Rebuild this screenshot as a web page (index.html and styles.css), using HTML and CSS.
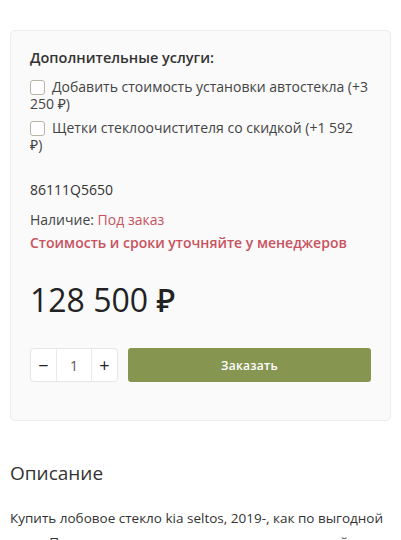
FILE: index.html
```html
<!DOCTYPE html>
<html>
<head>
<meta name="viewport" content="width=device-width, initial-scale=1">
<link rel="stylesheet" href="styles.css">
</head>
<body>

<div class="buy-box">
  <div class="extras-title">Дополнительные услуги:</div>
  <div class="extras">
    <label class="extra"><span class="check"></span>Добавить стоимость установки автостекла (+3 250 <span class="cur">₽)</span></label>
    <label class="extra"><span class="check"></span>Щетки стеклоочистителя со скидкой (+1 592 <span class="cur">₽)</span></label>
  </div>

  <div class="sku">86111Q5650</div>
  <div class="stock">Наличие: <span class="red">Под заказ</span></div>
  <div class="note">Стоимость и сроки уточняйте у менеджеров</div>

  <div class="price">128 500 ₽</div>

  <div class="buy-row">
    <div class="qty">
      <span class="qty-btn">&minus;</span>
      <span class="qty-val">1</span>
      <span class="qty-btn">+</span>
    </div>
    <button class="order">Заказать</button>
  </div>
</div>

<h2 class="desc-title">Описание</h2>
<p class="desc">Купить лобовое стекло kia seltos, 2019-, как по выгодной цене. Продажа и установка автостекол с гарантией на лучших условиях.</p>

</body>
</html>
```

FILE: styles.css
```css
* {
  box-sizing: border-box;
}

body {
  margin: 0;
  font-family: "Open Sans", "Noto Sans", sans-serif;
  color: #333;
  background: #fff;
}

.buy-box {
  margin: 30px 10px 0;
  padding: 17px 19px 38px;
  border: 1px solid #ececec;
  border-radius: 5px;
  background: #fafafa;
}

.extras-title {
  font-size: 14.5px;
  font-weight: 600;
  line-height: 20px;
}

.extras {
  margin-top: 10px;
  padding-right: 2px;
}

.extra {
  display: block;
  font-size: 14px;
  line-height: 17px;
  color: #444;
  margin-bottom: 7px;
}

.cur {
  padding-right: 5px;
}

.check {
  display: inline-block;
  width: 15px;
  height: 15px;
  border: 1px solid #b9b4a6;
  border-radius: 3px;
  background: #fff;
  vertical-align: -3px;
  margin-right: 7px;
}

.sku {
  margin-top: 27px;
  font-size: 14px;
  line-height: 20px;
}

.stock {
  margin-top: 10px;
  font-size: 14px;
  line-height: 20px;
  color: #444;
}

.red {
  color: #c8535f;
}

.note {
  margin-top: 3px;
  font-size: 14px;
  line-height: 20px;
  font-weight: 600;
  color: #c8535f;
}

.price {
  margin-top: 27px;
  font-size: 32px;
  line-height: 40px;
  font-weight: 500;
  color: #222;
}

.buy-row {
  display: flex;
  gap: 10px;
  margin-top: 28px;
  height: 34px;
}

.qty {
  display: flex;
  width: 88px;
  border: 1px solid #e6e6e6;
  border-radius: 4px;
  background: #fff;
}

.qty-btn {
  width: 25px;
  display: flex;
  align-items: center;
  justify-content: center;
  font-size: 18px;
  color: #222;
}

.qty-val {
  flex: 1;
  display: flex;
  align-items: center;
  justify-content: center;
  font-size: 14px;
  color: #555;
  border-left: 1px solid #eaeaea;
  border-right: 1px solid #eaeaea;
}

.order {
  flex: 1;
  border: 0;
  border-radius: 3px;
  background: #869651;
  color: #fff;
  font-family: inherit;
  font-size: 12px;
  font-weight: 600;
  letter-spacing: 0.3px;
}

.desc-title {
  margin: 37px 10px 0;
  font-size: 19px;
  line-height: 30px;
  font-weight: 400;
  color: #333;
}

.desc {
  margin: 18px 10px 0;
  font-size: 13.5px;
  line-height: 24px;
  color: #333;
}
```
